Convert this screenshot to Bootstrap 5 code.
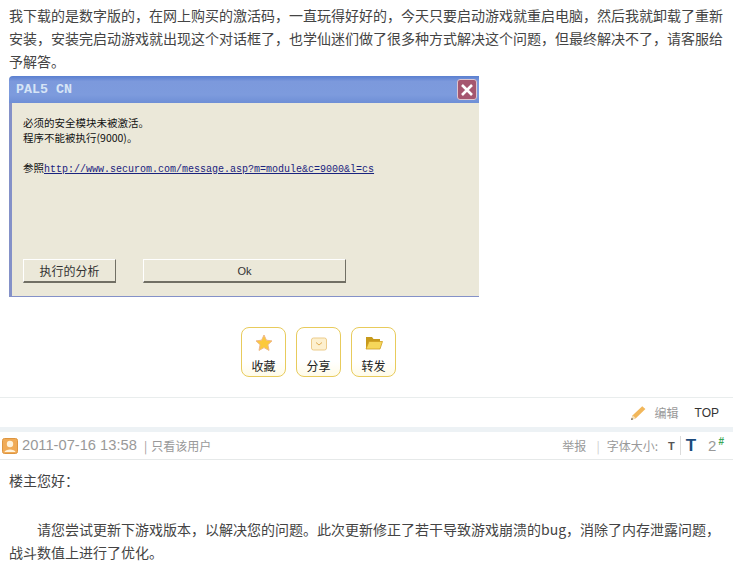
<!DOCTYPE html>
<html lang="zh-CN">
<head>
    <meta charset="UTF-8">
    <meta name="viewport" content="width=device-width, initial-scale=1.0">
    <link href="https://cdn.jsdelivr.net/npm/bootstrap@5.3.3/dist/css/bootstrap.min.css" rel="stylesheet">
    <script src="https://cdn.jsdelivr.net/npm/bootstrap@5.3.3/dist/js/bootstrap.bundle.min.js"></script>
    <title>帖子</title>
    <style>
        body {
            background: #fff;
            font-family: "Noto Sans CJK SC", "Liberation Sans", sans-serif;
            font-size: 14px;
            color: #444;
        }

        .page-wrap {
            width: 733px;
        }

        .post-text {
            margin: 0;
            padding: 4px 9px 0;
            line-height: 23px;
        }

        .xp-dialog {
            width: 470px;
            height: 221px;
            margin: 3px 0 0 9px;
            border-radius: 4px 0 0 0;
            overflow: hidden;
            background: #ebe8d9;
        }

        .xp-title {
            height: 27px;
            padding: 0 2px 0 7px;
            background: linear-gradient(#5a7fd0 0, #7c99dc 20%, #7d9bdd 70%, #6e8fd6 100%);
            color: #d6e4f6;
            font: bold 13.3px "Liberation Mono", monospace;
        }

        .xp-close {
            width: 20px;
            height: 21px;
            border: 1px solid #dcc6d0;
            border-radius: 3px;
            background: #a5566f;
        }

        .xp-body {
            border-left: 3px solid #8491c8;
            border-bottom: 1px solid #8491c8;
            padding: 12px 0 13px 11px;
            color: #111;
            font-size: 10.5px;
            line-height: 15px;
        }

        .xp-link-line {
            margin-top: 15px;
        }

        .xp-link {
            color: #1a237e;
            font-family: "Liberation Mono", monospace;
            font-size: 10px;
        }

        .xp-btn {
            height: 24px;
            padding: 0;
            border: 1px solid;
            border-color: #fff #716f64 #716f64 #fff;
            border-bottom-width: 2px;
            border-radius: 0;
            background: #ebe8d9;
            color: #333;
            font-size: 12px;
            line-height: 20px;
        }

        .btn-run {
            width: 93px;
        }

        .btn-ok {
            width: 203px;
            margin-left: 27px;
            font-family: "Liberation Sans", sans-serif;
            font-size: 11px;
        }

        .share-row {
            gap: 10px;
            margin: 30px 0 20px;
            padding-right: 96px;
        }

        .share-btn {
            width: 45px;
            height: 50px;
            padding-top: 6px;
            border: 1px solid #e8cb5c;
            border-radius: 8px;
            background: linear-gradient(#fff 70%, #fffbe8);
            color: #222;
            font-size: 12px;
            line-height: 16px;
            text-decoration: none;
        }

        .share-btn svg {
            display: block;
            margin-bottom: 6px;
        }

        .tool-row {
            height: 30px;
            padding-right: 14px;
            border-top: 1px solid #e9eded;
            font-size: 12px;
            color: #999;
        }

        .edit-icon {
            margin-right: 8px;
        }

        .top-link {
            margin-left: 16px;
            color: #333;
            font-family: "Liberation Sans", sans-serif;
            font-size: 12px;
            text-decoration: none;
        }

        .band {
            height: 5px;
            background: #edf2f5;
        }

        .post-head {
            height: 28px;
            padding: 0 9px 0 2px;
            border-bottom: 1px solid #e6e9e9;
            color: #999;
            font-size: 12px;
        }

        .post-date {
            margin: 0 7px 0 4px;
            font-family: "Liberation Sans", sans-serif;
            font-size: 14.7px;
        }

        .user-only {
            margin-left: 4px;
        }

        .head-sep {
            margin: 0 7px 0 10px;
            color: #ccc;
        }

        .size-small {
            margin-left: 10px;
            color: #555;
            font: bold 11px "Liberation Sans", sans-serif;
        }

        .size-big {
            margin-left: 5px;
            padding-left: 5px;
            border-left: 1px solid #dcdcdc;
            color: #1c4a7c;
            font: bold 17px/19px "Liberation Sans", sans-serif;
        }

        .floor-no {
            margin-left: 12px;
            font: 15px "Liberation Sans", sans-serif;
        }

        .floor-no sup {
            top: -6px;
            margin-left: 2px;
            color: #3aa655;
            font-size: 10px;
            font-weight: bold;
        }

        .reply-text {
            padding: 9px 9px 0;
            line-height: 23px;
        }

        .reply-text p {
            margin: 0 0 26px;
        }

        .reply-text .indent {
            margin: 0;
            text-indent: 2em;
        }
    </style>
</head>

<body>
    <div class="page-wrap">
        <p class="post-text">我下载的是数字版的，在网上购买的激活码，一直玩得好好的，今天只要启动游戏就重启电脑，然后我就卸载了重新安装，安装完启动游戏就出现这个对话框了，也学仙迷们做了很多种方式解决这个问题，但最终解决不了，请客服给予解答。</p>

        <div class="xp-dialog d-flex flex-column">
            <div class="xp-title d-flex align-items-center justify-content-between flex-shrink-0">
                <span>PAL5 CN</span>
                <span class="xp-close d-flex align-items-center justify-content-center">
                    <svg width="14" height="14" viewBox="0 0 14 14"><path d="M2 2 12 12M12 2 2 12" stroke="#fff" stroke-width="2.6"/></svg>
                </span>
            </div>
            <div class="xp-body d-flex flex-column flex-grow-1">
                <div>必须的安全模块未被激活。</div>
                <div>程序不能被执行(9000)。</div>
                <div class="xp-link-line">参照<a class="xp-link" href="#">http://www.securom.com/message.asp?m=module&amp;c=9000&amp;l=cs</a></div>
                <div class="d-flex mt-auto">
                    <button class="xp-btn btn-run" type="button">执行的分析</button>
                    <button class="xp-btn btn-ok" type="button">Ok</button>
                </div>
            </div>
        </div>

        <div class="share-row d-flex justify-content-center">
            <a class="share-btn d-flex flex-column align-items-center" href="#">
                <svg width="18" height="18" viewBox="0 0 18 18"><path d="M9 1 11.400 6.200 17 6.900 12.900 10.700 14 16.400 9 13.600 4 16.400 5.100 10.700 1 6.900 6.600 6.200Z" fill="#fcc93b" stroke="#efb98a"/></svg>
                <span>收藏</span>
            </a>
            <a class="share-btn d-flex flex-column align-items-center" href="#">
                <svg width="18" height="18" viewBox="0 0 18 18"><rect x="1.500" y="4" width="15" height="12" rx="2" fill="#fdf0cf" stroke="#eccb8a"/><path d="M6 8.500 9 11 12 8.500" fill="none" stroke="#e0ac55"/></svg>
                <span>分享</span>
            </a>
            <a class="share-btn d-flex flex-column align-items-center" href="#">
                <svg width="18" height="18" viewBox="0 0 18 18"><path d="M1 3H7L8.500 5H15V15H1Z" fill="#c79a1c"/><path d="M4 7.500H17.500L15 15H1Z" fill="#f6d75a" stroke="#d0a022" stroke-width=".8"/></svg>
                <span>转发</span>
            </a>
        </div>

        <div class="tool-row d-flex align-items-center justify-content-end">
            <svg class="edit-icon" width="17" height="17" viewBox="0 0 16 16"><path d="M1 15 2.500 10.500 11.500 2 14.500 4.800 5.500 13.500Z" fill="#f2b75a"/><path d="M1 15 2.500 10.500 5.500 13.500Z" fill="#f5dfb8"/><path d="M1 15 1.700 13 3 14.300Z" fill="#555"/></svg>
            <span>编辑</span>
            <a class="top-link" href="#">TOP</a>
        </div>
        <div class="band"></div>

        <div class="post-head d-flex align-items-center">
            <svg width="16" height="16" viewBox="0 0 16 16"><rect x=".5" y=".5" width="15" height="15" rx="2" fill="#f0ab57" stroke="#dd9540"/><circle cx="8" cy="6" r="3.200" fill="#fff3dc"/><path d="M2.500 14C3 10.500 13 10.500 13.500 14Z" fill="#fff3dc"/></svg>
            <span class="post-date">2011-07-16 13:58</span>
            <span>|</span>
            <span class="user-only">只看该用户</span>
            <span class="ms-auto">举报</span>
            <span class="head-sep">|</span>
            <span>字体大小:</span>
            <span class="size-small">T</span>
            <span class="size-big">T</span>
            <span class="floor-no">2<sup>#</sup></span>
        </div>

        <div class="reply-text">
            <p>楼主您好：</p>
            <p class="indent">请您尝试更新下游戏版本，以解决您的问题。此次更新修正了若干导致游戏崩溃的bug，消除了内存泄露问题，战斗数值上进行了优化。</p>
        </div>
    </div>
</body>

</html>
